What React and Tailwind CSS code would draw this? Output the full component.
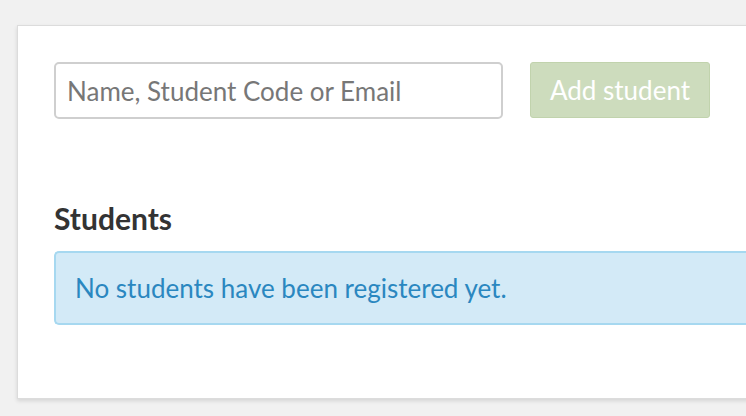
export default function App() {
  return (
    <div className="min-h-[416px] w-[746px] overflow-hidden bg-[#f1f1f1] pt-[25px] pl-[17px]" style={{ fontFamily: "Lato, 'Open Sans', sans-serif" }}>
      <div className="w-[800px] h-[374px] bg-white border border-[#dcdcdc] shadow-[0_2px_4px_rgba(0,0,0,0.12)] pl-[36px] pt-[36px]">
        <div className="flex items-start gap-[27px]">
          <div className="w-[449px] h-[57px] rounded-[5px] border-2 border-[#cfcfcf] flex items-center px-[11px]">
            <span className="text-[26px] leading-none text-[#777]">Name, Student Code or Email</span>
          </div>
          <div className="w-[180px] h-[56px] rounded-[3px] bg-[#cddcbd] border border-[#c1d3ad] flex items-center justify-center">
            <span className="text-[26px] leading-none text-white">Add student</span>
          </div>
        </div>
        <h2 className="mt-[82px] text-[30px] font-bold text-[#333] leading-[35px]">Students</h2>
        <div className="mt-[15px] h-[74px] rounded-l-[5px] bg-[#d3eaf7] border-2 border-r-0 border-[#a6d8f0] flex items-center pl-[19px]">
          <span className="text-[26px] leading-none text-[#2a87c0]">No students have been registered yet.</span>
        </div>
      </div>
    </div>
  );
}
